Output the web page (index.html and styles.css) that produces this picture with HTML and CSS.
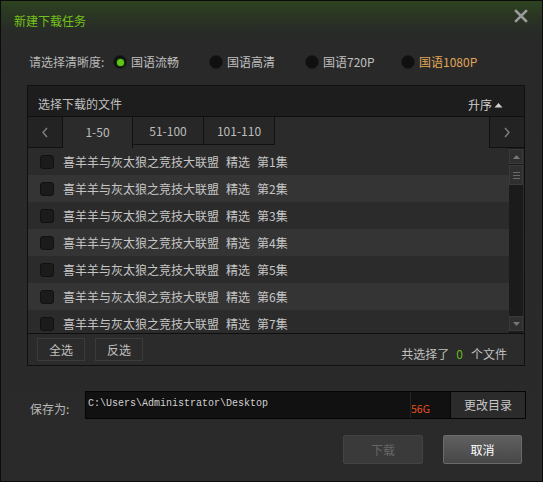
FILE: index.html
```html
<!DOCTYPE html>
<html lang="zh">
<head>
<meta charset="utf-8">
<title>新建下载任务</title>
<link rel="stylesheet" href="styles.css">
</head>
<body>
<div class="win">
  <div class="titlebar">
    <span class="title">新建下载任务</span>
    <svg class="close" width="14" height="14" viewBox="0 0 14 14"><path d="M2 2 L12 12 M12 2 L2 12" stroke="#9a9a9a" stroke-width="2.6" stroke-linecap="square"/></svg>
  </div>

  <div class="quality">
    <span class="qlabel">请选择清晰度:</span>
    <span class="opt on"><i class="radio"></i>国语流畅</span>
    <span class="opt"><i class="radio"></i>国语高清</span>
    <span class="opt"><i class="radio"></i>国语720P</span>
    <span class="opt hd"><i class="radio"></i>国语1080P</span>
  </div>

  <div class="panel">
    <div class="phead">
      <span class="ptitle">选择下载的文件</span>
      <span class="sort">升序<svg width="9" height="6" viewBox="0 0 9 6"><path d="M0.5 5.5 L4.5 1 L8.5 5.5 Z" fill="#d0d0d0"/></svg></span>
    </div>
    <div class="tabs">
      <div class="arrow left"><svg width="6" height="11" viewBox="0 0 6 11"><path d="M5 1 L1 5.5 L5 10" stroke="#7a7a7a" stroke-width="1.6" fill="none"/></svg></div>
      <div class="tab active">1-50</div>
      <div class="tab">51-100</div>
      <div class="tab">101-110</div>
      <div class="tabfill"></div>
      <div class="arrow right"><svg width="6" height="11" viewBox="0 0 6 11"><path d="M1 1 L5 5.5 L1 10" stroke="#7a7a7a" stroke-width="1.6" fill="none"/></svg></div>
    </div>
    <div class="listwrap">
      <div class="list">
        <div class="row"><i class="cb"></i><span class="name">喜羊羊与灰太狼之竞技大联盟</span><span class="tag">精选</span><span>第1集</span></div>
        <div class="row"><i class="cb"></i><span class="name">喜羊羊与灰太狼之竞技大联盟</span><span class="tag">精选</span><span>第2集</span></div>
        <div class="row"><i class="cb"></i><span class="name">喜羊羊与灰太狼之竞技大联盟</span><span class="tag">精选</span><span>第3集</span></div>
        <div class="row"><i class="cb"></i><span class="name">喜羊羊与灰太狼之竞技大联盟</span><span class="tag">精选</span><span>第4集</span></div>
        <div class="row"><i class="cb"></i><span class="name">喜羊羊与灰太狼之竞技大联盟</span><span class="tag">精选</span><span>第5集</span></div>
        <div class="row"><i class="cb"></i><span class="name">喜羊羊与灰太狼之竞技大联盟</span><span class="tag">精选</span><span>第6集</span></div>
        <div class="row"><i class="cb"></i><span class="name">喜羊羊与灰太狼之竞技大联盟</span><span class="tag">精选</span><span>第7集</span></div>
      </div>
      <div class="scroll">
        <div class="sbtn up"><svg width="7" height="4" viewBox="0 0 7 4"><path d="M0 4 L3.5 0 L7 4 Z" fill="#777"/></svg></div>
        <div class="thumb"><i></i><i></i><i></i></div>
        <div class="track"></div>
        <div class="sbtn down"><svg width="7" height="4" viewBox="0 0 7 4"><path d="M0 0 L3.5 4 L7 0 Z" fill="#777"/></svg></div>
      </div>
    </div>
    <div class="pfoot">
      <span class="btn small">全选</span>
      <span class="btn small">反选</span>
      <span class="count">共选择了<b>0</b>个文件</span>
    </div>
  </div>

  <div class="save">
    <span class="slabel">保存为:</span>
    <div class="pathbox">
      <span class="path">C:\Users\Administrator\Desktop</span>
      <span class="free">56G</span>
      <span class="change">更改目录</span>
    </div>
  </div>

  <div class="actions">
    <span class="abtn disabled">下载</span>
    <span class="abtn primary">取消</span>
  </div>
</div>
</body>
</html>
```

FILE: styles.css
```css
* { box-sizing: border-box; }
html, body { margin: 0; padding: 0; background: #2a2a2a; }
body {
  font-family: "Noto Sans CJK SC", "Liberation Sans", sans-serif;
  font-size: 12px;
  color: #bcbcbc;
}
.win {
  width: 543px;
  height: 482px;
  border: 1px solid #0c0c0c;
  background: linear-gradient(to bottom, #2d4320 0px, #2a3623 14px, #282b27 30px, #292929 42px, #2a2a2a 100%);
  display: flex;
  flex-direction: column;
}
.titlebar {
  height: 40px;
  display: flex;
  justify-content: space-between;
  padding: 0 14px 0 13px;
}
.title {
  color: #74c11c;
  font-size: 12px;
  line-height: 16px;
  margin-top: 12px;
}
.close { margin-top: 8px; }

.quality {
  display: flex;
  align-items: center;
  height: 20px;
  margin: 11px 0 13px;
  padding-left: 28px;
  line-height: 20px;
}
.qlabel { width: 84px; color: #b8b8b8; }
.opt {
  width: 96px;
  display: flex;
  align-items: center;
  color: #c0c0c0;
}
.opt.hd { color: #e0a658; }
.radio {
  width: 14px;
  height: 14px;
  border-radius: 50%;
  background: #0f0f0f;
  border: 1px solid #1c1c1c;
  margin-right: 4px;
  display: flex;
  align-items: center;
  justify-content: center;
}
.opt.on .radio::after {
  content: "";
  width: 7px;
  height: 7px;
  border-radius: 50%;
  background: #5cc814;
  box-shadow: 0 0 2px #3d9a0a;
}

.panel {
  margin-left: 26px;
  width: 498px;
  height: 281px;
  border: 1px solid #101010;
  background: #2b2b2b;
  display: flex;
  flex-direction: column;
}
.phead {
  height: 31px;
  flex: none;
  background: #1d1d1d;
  border-bottom: 1px solid #0f0f0f;
  display: flex;
  justify-content: space-between;
  padding: 0 21px 0 10px;
  line-height: 16px;
}
.ptitle { margin-top: 10px; color: #c0c0c0; }
.sort {
  margin-top: 7px;
  color: #cfcfcf;
  display: flex;
  align-items: center;
  gap: 2px;
}
.tabs {
  height: 31px;
  flex: none;
  display: flex;
}
.arrow {
  width: 35px;
  height: 31px;
  background: #232323;
  border-bottom: 1px solid #111;
  display: flex;
  align-items: center;
  justify-content: center;
}
.arrow.left { border-right: 1px solid #111; }
.arrow.right { border-left: 1px solid #111; }
.tab {
  width: 71px;
  height: 28px;
  border-right: 1px solid #111;
  border-bottom: 1px solid #111;
  background: #272727;
  color: #bcbcbc;
  display: flex;
  align-items: center;
  justify-content: center;
  line-height: 16px;
  padding-top: 1px;
}
.tab.active {
  width: 70px;
  height: 31px;
  background: #2b2b2b;
  border-bottom: none;
  padding-bottom: 2px;
}
.tabfill { flex: 1; }

.listwrap {
  height: 186px;
  flex: none;
  display: flex;
  border-bottom: 1px solid #0f0f0f;
  overflow: hidden;
}
.list { flex: 1; }
.row {
  height: 27px;
  display: flex;
  align-items: center;
  padding-left: 12px;
  background: #2b2b2b;
  color: #c6c6c6;
  line-height: 16px;
}
.row:nth-child(even) { background: #343434; }
.name { margin-right: 7px; }
.tag { margin-right: 7px; }
.cb {
  width: 14px;
  height: 14px;
  border-radius: 3px;
  background: #1b1b1b;
  border: 1px solid #111;
  margin-right: 9px;
  flex: none;
}
.scroll {
  width: 14px;
  margin-right: 1px;
  background: #1b1b1b;
  display: flex;
  flex-direction: column;
  padding: 1px 0 2px;
}
.sbtn {
  height: 15px;
  background: #2f2f2f;
  border: 1px solid #3a3a3a;
  display: flex;
  align-items: center;
  justify-content: center;
}
.thumb {
  height: 20px;
  margin-top: 1px;
  background: #2f2f2f;
  border: 1px solid #3a3a3a;
  display: flex;
  flex-direction: column;
  align-items: center;
  justify-content: center;
  gap: 2px;
}
.thumb i { width: 7px; height: 1px; background: #6a6a6a; }
.track { flex: 1; }

.pfoot {
  flex: 1;
  display: flex;
  padding: 4px 17px 0 9px;
}
.btn.small {
  width: 48px;
  height: 23px;
  background: #2b2b2b;
  border: 1px solid #3b3b3b;
  color: #c0c0c0;
  display: flex;
  align-items: center;
  justify-content: center;
  line-height: 16px;
  margin-right: 10px;
}
.count {
  margin-left: auto;
  margin-top: 8px;
  line-height: 16px;
  color: #c0c0c0;
}
.count b { font-weight: normal; color: #6ab81e; margin: 0 8px 0 7px; }

.save {
  display: flex;
  align-items: center;
  margin-top: 25px;
  padding-left: 29px;
}
.slabel { width: 55px; color: #b8b8b8; line-height: 16px; padding-top: 8px; }
.pathbox {
  width: 441px;
  height: 28px;
  border: 1px solid #050505;
  background: #111;
  display: flex;
}
.path {
  width: 325px;
  font-family: "Liberation Mono", monospace;
  font-size: 10px;
  color: #d0d0d0;
  padding: 6px 0 0 2px;
  line-height: 12px;
  border-right: 1px solid #242424;
}
.free {
  width: 39px;
  color: #e8521e;
  font-size: 10.5px;
  line-height: 12px;
  padding-top: 11px;
}
.change {
  flex: 1;
  background: #2b2b2b;
  border-left: 1px solid #060606;
  color: #c6c6c6;
  display: flex;
  align-items: center;
  justify-content: center;
  line-height: 16px;
}

.actions {
  display: flex;
  justify-content: flex-end;
  gap: 20px;
  margin-top: 16px;
  padding-right: 20px;
}
.abtn {
  width: 80px;
  height: 29px;
  display: flex;
  align-items: center;
  justify-content: center;
  line-height: 16px;
  border-radius: 2px;
}
.abtn.disabled {
  background: #3a3a3a;
  border: 1px solid #434343;
  color: #666;
}
.abtn.primary {
  width: 79px;
  background: linear-gradient(to bottom, #606060, #474747);
  border: 1px solid #6a6a6a;
  color: #fff;
}
```
